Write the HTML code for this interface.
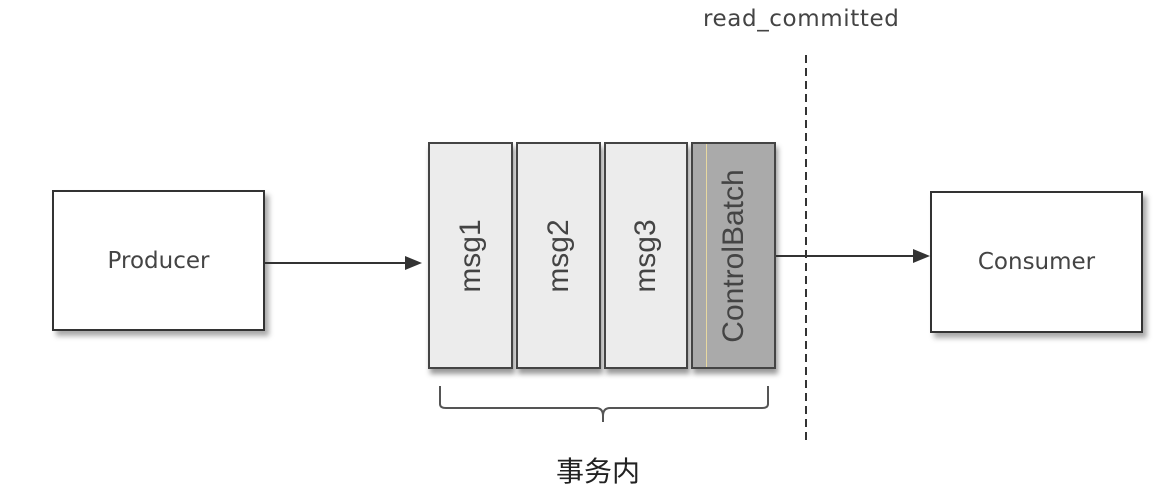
<!DOCTYPE html>
<html><head><meta charset="utf-8"><style>
html,body{margin:0;padding:0;background:#fff;}
body{width:1158px;height:490px;overflow:hidden;position:relative;font-family:"DejaVu Sans","Liberation Sans",sans-serif;color:#333;}
.box{position:absolute;background:#fff;border:2px solid #333;box-shadow:4px 5px 5px #aaa;box-sizing:border-box;display:flex;align-items:center;justify-content:center;font-size:23px;color:#444;}
.msg{position:absolute;top:142px;height:227px;border:2px solid #444;box-sizing:border-box;background:#ececec;box-shadow:2px 5px 5px #999;}
.msg span{position:absolute;left:50%;top:50%;transform:translate(-50%,-50%) rotate(-90deg);font-family:"Liberation Sans",sans-serif;font-size:30px;color:#444;white-space:nowrap;}
</style></head><body>
<div style="position:absolute;left:703px;top:6px;font-size:23px;color:#444;letter-spacing:0.6px">read_committed</div>
<div class="box" style="left:52px;top:190px;width:213px;height:141px">Producer</div>
<div class="box" style="left:930px;top:191px;width:213px;height:142px">Consumer</div>
<div class="msg" style="left:428px;width:85px"><span>msg1</span></div>
<div class="msg" style="left:516px;width:85px"><span>msg2</span></div>
<div class="msg" style="left:604px;width:84px"><span>msg3</span></div>
<div class="msg" style="left:691px;width:85px;background:#aaa"><span>ControlBatch</span><div style="position:absolute;left:13px;top:0;bottom:0;width:1px;background:#e8d9a0"></div></div>
<svg width="1158" height="490" style="position:absolute;left:0;top:0">
<line x1="265" y1="263" x2="408" y2="263" stroke="#333" stroke-width="2"/>
<polygon points="422,263 405,256 405,270" fill="#333"/>
<line x1="776" y1="256" x2="916" y2="256" stroke="#333" stroke-width="2"/>
<polygon points="930,256 913,249 913,263" fill="#333"/>
<line x1="806" y1="55" x2="806" y2="440" stroke="#333" stroke-width="2" stroke-dasharray="8,5"/>
<path d="M440 386 V404 Q440 408 446 408 H596 Q603 408 603 416 V422 M603 416 Q603 408 610 408 H762 Q768 408 768 404 V386" fill="none" stroke="#555" stroke-width="2"/>
</svg>
<div style="position:absolute;left:556px;top:450px;font-family:'Noto Sans CJK SC',sans-serif;font-size:28px;color:#222">事务内</div>
</body></html>
